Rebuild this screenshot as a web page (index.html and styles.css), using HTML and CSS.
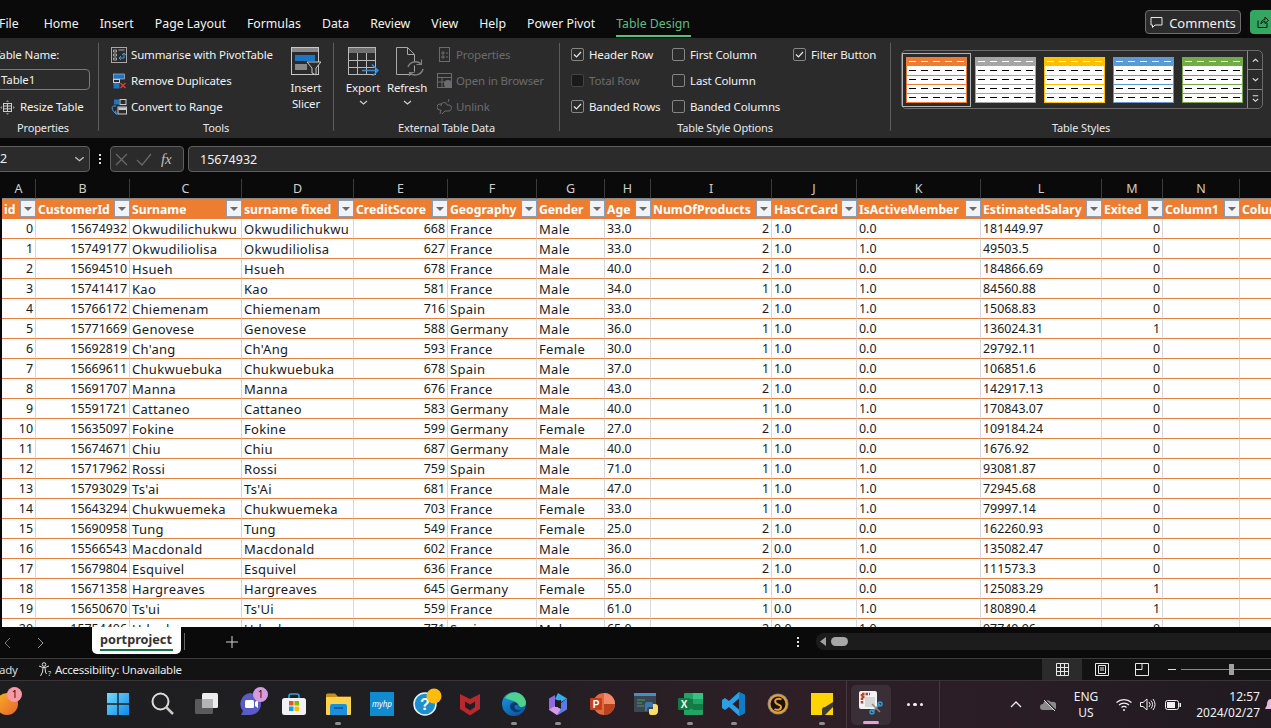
FILE: index.html
```html
<!DOCTYPE html>
<html lang="en">
<head>
<meta charset="utf-8">
<title>portproject - Excel</title>
<link rel="stylesheet" href="styles.css">
</head>
<body>
<svg class="defs" width="0" height="0" aria-hidden="true">
  <symbol id="swatch" viewBox="0 0 61 46">
    <rect width="61" height="46" fill="currentColor"/>
    <rect x="1" y="9" width="59" height="9" fill="#fff"/>
    <rect x="1" y="19" width="59" height="8" fill="#fff"/>
    <rect x="1" y="28" width="59" height="8" fill="#fff"/>
    <rect x="1" y="37" width="59" height="8" fill="#fff"/>
    <path d="M3 4.500h7m5 0h7m5 0h7m5 0h7m5 0h7" stroke="#fff" fill="none"/>
    <path d="M3 13.500h7m5 0h7m5 0h7m5 0h7m5 0h7M3 22.500h7m5 0h7m5 0h7m5 0h7m5 0h7M3 31.500h7m5 0h7m5 0h7m5 0h7m5 0h7M3 40.500h7m5 0h7m5 0h7m5 0h7m5 0h7" stroke="#000" fill="none"/>
  </symbol>
  <symbol id="check" viewBox="0 0 13 13"><path d="M3 6.500l2.500 2.500L10 4" fill="none" stroke="#e8e8e8" stroke-width="1.200"/></symbol>
  <symbol id="chev" viewBox="0 0 9 5"><path d="M1 1l3.500 3L8 1" fill="none" stroke="#d0d0d0" stroke-width="1.200"/></symbol>
</svg>

<nav class="tabs">
  <span class="tab tab-file">File</span>
  <span class="tab">Home</span>
  <span class="tab">Insert</span>
  <span class="tab">Page Layout</span>
  <span class="tab">Formulas</span>
  <span class="tab">Data</span>
  <span class="tab">Review</span>
  <span class="tab">View</span>
  <span class="tab">Help</span>
  <span class="tab">Power Pivot</span>
  <span class="tab tab-active">Table Design</span>
  <span class="tabs-space"></span>
  <button class="comments">
    <svg width="13" height="13" viewBox="0 0 13 13"><path d="M1 1.500h11v7.500H5l-2.500 2.500V9H1z" fill="none" stroke="#e8e8e8"/></svg>
    Comments
  </button>
  <button class="share">
    <svg width="12" height="12" viewBox="0 0 12 12"><path d="M1 4.500v7h9V7M4 8c0-3 2-4.500 4-4.500V1l3.500 3.500L8 7.500V5.500C6 5.500 5 6.500 4 8z" fill="none" stroke="#111"/></svg>
  </button>
</nav>

<section class="ribbon">
  <div class="group g-props">
    <div class="g-body g-col">
      <div class="line line-clip">Table Name:</div>
      <div class="line"><div class="namebox">Table1</div></div>
      <div class="line line-icon resize">
        <svg width="15" height="15" viewBox="0 0 15 15"><rect x="3.500" y="3.500" width="8" height="8" fill="none" stroke="#ccc"/><path d="M3.500 6h8M3.500 8.800h8M7.500 3.500v8" stroke="#ccc"/><path d="M7.500 0l-1.500 2h3zM7.500 15l-1.500-2h3zM0 7.500l2-1.500v3zM15 7.500l-2-1.500v3z" fill="#4a9ad8"/></svg>
        Resize Table
      </div>
    </div>
    <div class="g-label">Properties</div>
  </div>
  <div class="sep"></div>

  <div class="group g-tools">
    <div class="g-body g-row">
      <div class="g-col tools-list">
        <div class="line line-icon">
          <svg width="16" height="16" viewBox="0 0 16 16"><rect x=".5" y=".5" width="15" height="15" fill="none" stroke="#a8a8a8"/><path d="M2.500 3h3v2h-3zM2.500 7h3v2h-3zM2.500 11h3v2h-3zM7.500 3h6" stroke="#a8a8a8" fill="none"/><path d="M13 6v5H8m2-2l-2 2 2 2M11 8l2-2 2 2" stroke="#4a9ad8" fill="none"/></svg>
          Summarise with PivotTable
        </div>
        <div class="line line-icon">
          <svg width="16" height="16" viewBox="0 0 16 16"><rect x="2.500" y="1" width="11" height="5" fill="#1d76c4" stroke="#ccc" stroke-width=".6"/><rect x="2.500" y="6.500" width="6" height="3" fill="none" stroke="#ccc"/><rect x="2.500" y="10" width="6" height="5.500" fill="#1d76c4"/><path d="M9.500 10l5 5m0-5l-5 5" stroke="#e0413a" stroke-width="1.300"/></svg>
          Remove Duplicates
        </div>
        <div class="line line-icon">
          <svg width="16" height="16" viewBox="0 0 16 16"><rect x="3" y=".5" width="5" height="5" fill="#1d76c4"/><rect x="9" y=".5" width="6" height="5" fill="none" stroke="#ccc"/><rect x="7" y="8" width="8.500" height="7" fill="none" stroke="#ccc"/><rect x="7.500" y="8.500" width="7.500" height="2.500" fill="#ccc"/><path d="M5 7H3C1 7 .5 10 2 11.500L4 14h3M5 11.500l-1 2.500 2 1.500" fill="none" stroke="#4a9ad8"/></svg>
          Convert to Range
        </div>
      </div>
      <div class="bigbtn slicer">
        <svg class="big-ic" width="30" height="29" viewBox="0 0 30 29"><rect x=".5" y=".5" width="27" height="27" fill="none" stroke="#c8c8c8"/><rect x="1" y="1" width="26" height="4" fill="#8a8a8a"/><rect x="4" y="8" width="20" height="6" fill="#1d76c4"/><rect x="4" y="17" width="12" height="6" fill="#888"/><path d="M16 15h14l-5 6v7l-4-2v-5z" fill="#2b2b2b" stroke="#c8c8c8"/></svg>
        <span>Insert<br>Slicer</span>
      </div>
    </div>
    <div class="g-label">Tools</div>
  </div>
  <div class="sep"></div>

  <div class="group g-ext">
    <div class="g-body g-row">
      <div class="bigbtn export">
        <svg class="big-ic" width="31" height="29" viewBox="0 0 31 29"><rect x=".5" y=".5" width="27" height="27" fill="none" stroke="#b8b8b8"/><rect x="1" y="1" width="26" height="5" fill="#707070"/><path d="M9.500 6v21M18.500 6v21M1 13.500h26M1 20.500h26" stroke="#b8b8b8"/><path d="M14 23.500h16m-6-6l6 6-6 6" fill="none" stroke="#2f8fdc" stroke-width="1.500"/></svg>
        <span>Export</span>
        <svg class="chev" width="9" height="5"><use href="#chev"/></svg>
      </div>
      <div class="bigbtn refresh">
        <svg class="big-ic refresh-ic" width="28" height="29" viewBox="0 0 28 29"><path d="M.5 .5h11l7 7v20H.500zM11.500 .5v7h7" fill="none" stroke="#a8a8a8"/><path d="M12 20a8 8 0 0 1 13-3M27 22a8 8 0 0 1-13 4" fill="#2b2b2b" stroke="#808080" stroke-width="1.500"/><path d="M25.500 12.500v5h-5M13.500 30v-4.500h5" fill="none" stroke="#808080" stroke-width="1.200"/></svg>
        <span>Refresh</span>
        <svg class="chev" width="9" height="5"><use href="#chev"/></svg>
      </div>
      <div class="g-col ext-list">
        <div class="line line-icon dis">
          <svg width="15" height="16" viewBox="0 0 15 16"><rect x="2.500" y=".5" width="10" height="14" fill="none" stroke="#6c6c6c"/><path d="M5 5h2v2H5zM5 9h2v2H5zM9 6h2M9 10h2" stroke="#6c6c6c" fill="none"/></svg>
          Properties
        </div>
        <div class="line line-icon dis">
          <svg width="15" height="16" viewBox="0 0 15 16"><rect x=".5" y=".5" width="14" height="14" fill="none" stroke="#6c6c6c"/><path d="M1 4.500h13M5 4.500v10M1 9h8" stroke="#6c6c6c"/><circle cx="11" cy="11" r="4" fill="#6c6c6c"/></svg>
          Open in Browser
        </div>
        <div class="line line-icon dis">
          <svg width="15" height="16" viewBox="0 0 15 16"><path d="M5 5H3a3 3 0 0 0 0 6h1l-1 4M8 12h3a3 3 0 0 0 1-6h-2a3 3 0 0 0-6 1M12 0l-1 3M8 12l-3 3" fill="none" stroke="#6c6c6c"/></svg>
          Unlink
        </div>
      </div>
    </div>
    <div class="g-label">External Table Data</div>
  </div>
  <div class="sep"></div>

  <div class="group g-opts">
    <div class="g-body opts-grid">
      <label class="opt"><span class="box"><svg width="13" height="13"><use href="#check"/></svg></span>Header Row</label>
      <label class="opt"><span class="box"></span>First Column</label>
      <label class="opt"><span class="box"><svg width="13" height="13"><use href="#check"/></svg></span>Filter Button</label>
      <label class="opt opt-dis"><span class="box"></span>Total Row</label>
      <label class="opt"><span class="box"></span>Last Column</label>
      <span></span>
      <label class="opt"><span class="box"><svg width="13" height="13"><use href="#check"/></svg></span>Banded Rows</label>
      <label class="opt"><span class="box"></span>Banded Columns</label>
    </div>
    <div class="g-label">Table Style Options</div>
  </div>
  <div class="sep"></div>

  <div class="group g-styles">
    <div class="g-body">
      <div class="gallery">
        <div class="swatches">
          <svg class="swatch sw-selected c-orange" width="61" height="46"><use href="#swatch"/></svg>
          <svg class="swatch c-grey" width="61" height="46"><use href="#swatch"/></svg>
          <svg class="swatch c-gold" width="61" height="46"><use href="#swatch"/></svg>
          <svg class="swatch c-blue" width="61" height="46"><use href="#swatch"/></svg>
          <svg class="swatch c-green" width="61" height="46"><use href="#swatch"/></svg>
        </div>
        <div class="gal-scroll">
          <span class="gal-btn"><svg width="7" height="5" viewBox="0 0 9 5"><path d="M1 4l3.500-3L8 4" fill="none" stroke="#e0e0e0" stroke-width="1.500"/></svg></span>
          <span class="gal-btn"><svg width="7" height="5" viewBox="0 0 9 5"><path d="M1 1l3.500 3L8 1" fill="none" stroke="#e0e0e0" stroke-width="1.500"/></svg></span>
          <span class="gal-btn"><svg width="7" height="9" viewBox="0 0 9 9"><path d="M1 1h7M1 5l3.500 3L8 5" fill="none" stroke="#e0e0e0" stroke-width="1.300"/></svg></span>
        </div>
      </div>
    </div>
    <div class="g-label">Table Styles</div>
  </div>
</section>

<section class="formula">
  <div class="fbox name">
    <span>A2</span>
    <svg width="11" height="6" viewBox="0 0 9 5"><path d="M1 1l3.500 3L8 1" fill="none" stroke="#c8c8c8"/></svg>
  </div>
  <div class="fdots"><i></i><i></i><i></i></div>
  <div class="fbox fbtns">
    <svg width="13" height="13" viewBox="0 0 13 13"><path d="M1 1l11 11m0-11L1 12" stroke="#6a6a6a" stroke-width="1.200"/></svg>
    <svg width="16" height="13" viewBox="0 0 16 13"><path d="M1 7l5 5L15 1" fill="none" stroke="#6a6a6a" stroke-width="1.200"/></svg>
    <span class="fx">fx</span>
  </div>
  <div class="fbox fval">15674932</div>
</section>

<main class="sheet">
<table class="grid">
<colgroup>
<col class="w34"><col class="w94"><col class="w112"><col class="w112"><col class="w94"><col class="w89"><col class="w68"><col class="w46"><col class="w121"><col class="w85"><col class="w124"><col class="w121"><col class="w61"><col class="w77"><col class="w100">
</colgroup>
<thead>
<tr class="letters"><th>A</th><th>B</th><th>C</th><th>D</th><th>E</th><th>F</th><th>G</th><th>H</th><th>I</th><th>J</th><th>K</th><th>L</th><th>M</th><th>N</th><th>O</th></tr>
<tr class="heads">
<th><div class="hc">id<b class="flt"></b></div></th>
<th><div class="hc">CustomerId<b class="flt"></b></div></th>
<th><div class="hc">Surname<b class="flt"></b></div></th>
<th><div class="hc">surname fixed<b class="flt"></b></div></th>
<th><div class="hc">CreditScore<b class="flt"></b></div></th>
<th><div class="hc">Geography<b class="flt"></b></div></th>
<th><div class="hc">Gender<b class="flt"></b></div></th>
<th><div class="hc">Age<b class="flt"></b></div></th>
<th><div class="hc">NumOfProducts<b class="flt"></b></div></th>
<th><div class="hc">HasCrCard<b class="flt"></b></div></th>
<th><div class="hc">IsActiveMember<b class="flt"></b></div></th>
<th><div class="hc">EstimatedSalary<b class="flt"></b></div></th>
<th><div class="hc">Exited<b class="flt"></b></div></th>
<th><div class="hc">Column1<b class="flt"></b></div></th>
<th><div class="hc">Column2<b class="flt"></b></div></th>
</tr>
</thead>
<tbody>
<tr><td>0</td><td>15674932</td><td>Okwudilichukwu</td><td>Okwudilichukwu</td><td>668</td><td>France</td><td>Male</td><td>33.0</td><td>2</td><td>1.0</td><td>0.0</td><td>181449.97</td><td>0</td><td></td><td></td></tr>
<tr><td>1</td><td>15749177</td><td>Okwudiliolisa</td><td>Okwudiliolisa</td><td>627</td><td>France</td><td>Male</td><td>33.0</td><td>2</td><td>1.0</td><td>1.0</td><td>49503.5</td><td>0</td><td></td><td></td></tr>
<tr><td>2</td><td>15694510</td><td>Hsueh</td><td>Hsueh</td><td>678</td><td>France</td><td>Male</td><td>40.0</td><td>2</td><td>1.0</td><td>0.0</td><td>184866.69</td><td>0</td><td></td><td></td></tr>
<tr><td>3</td><td>15741417</td><td>Kao</td><td>Kao</td><td>581</td><td>France</td><td>Male</td><td>34.0</td><td>1</td><td>1.0</td><td>1.0</td><td>84560.88</td><td>0</td><td></td><td></td></tr>
<tr><td>4</td><td>15766172</td><td>Chiemenam</td><td>Chiemenam</td><td>716</td><td>Spain</td><td>Male</td><td>33.0</td><td>2</td><td>1.0</td><td>1.0</td><td>15068.83</td><td>0</td><td></td><td></td></tr>
<tr><td>5</td><td>15771669</td><td>Genovese</td><td>Genovese</td><td>588</td><td>Germany</td><td>Male</td><td>36.0</td><td>1</td><td>1.0</td><td>0.0</td><td>136024.31</td><td>1</td><td></td><td></td></tr>
<tr><td>6</td><td>15692819</td><td>Ch'ang</td><td>Ch'Ang</td><td>593</td><td>France</td><td>Female</td><td>30.0</td><td>1</td><td>1.0</td><td>0.0</td><td>29792.11</td><td>0</td><td></td><td></td></tr>
<tr><td>7</td><td>15669611</td><td>Chukwuebuka</td><td>Chukwuebuka</td><td>678</td><td>Spain</td><td>Male</td><td>37.0</td><td>1</td><td>1.0</td><td>0.0</td><td>106851.6</td><td>0</td><td></td><td></td></tr>
<tr><td>8</td><td>15691707</td><td>Manna</td><td>Manna</td><td>676</td><td>France</td><td>Male</td><td>43.0</td><td>2</td><td>1.0</td><td>0.0</td><td>142917.13</td><td>0</td><td></td><td></td></tr>
<tr><td>9</td><td>15591721</td><td>Cattaneo</td><td>Cattaneo</td><td>583</td><td>Germany</td><td>Male</td><td>40.0</td><td>1</td><td>1.0</td><td>1.0</td><td>170843.07</td><td>0</td><td></td><td></td></tr>
<tr><td>10</td><td>15635097</td><td>Fokine</td><td>Fokine</td><td>599</td><td>Germany</td><td>Female</td><td>27.0</td><td>2</td><td>1.0</td><td>0.0</td><td>109184.24</td><td>0</td><td></td><td></td></tr>
<tr><td>11</td><td>15674671</td><td>Chiu</td><td>Chiu</td><td>687</td><td>Germany</td><td>Male</td><td>40.0</td><td>1</td><td>1.0</td><td>0.0</td><td>1676.92</td><td>0</td><td></td><td></td></tr>
<tr><td>12</td><td>15717962</td><td>Rossi</td><td>Rossi</td><td>759</td><td>Spain</td><td>Male</td><td>71.0</td><td>1</td><td>1.0</td><td>1.0</td><td>93081.87</td><td>0</td><td></td><td></td></tr>
<tr><td>13</td><td>15793029</td><td>Ts'ai</td><td>Ts'Ai</td><td>681</td><td>France</td><td>Male</td><td>47.0</td><td>1</td><td>1.0</td><td>1.0</td><td>72945.68</td><td>0</td><td></td><td></td></tr>
<tr><td>14</td><td>15643294</td><td>Chukwuemeka</td><td>Chukwuemeka</td><td>703</td><td>France</td><td>Female</td><td>33.0</td><td>1</td><td>1.0</td><td>1.0</td><td>79997.14</td><td>0</td><td></td><td></td></tr>
<tr><td>15</td><td>15690958</td><td>Tung</td><td>Tung</td><td>549</td><td>France</td><td>Female</td><td>25.0</td><td>2</td><td>1.0</td><td>0.0</td><td>162260.93</td><td>0</td><td></td><td></td></tr>
<tr><td>16</td><td>15566543</td><td>Macdonald</td><td>Macdonald</td><td>602</td><td>France</td><td>Male</td><td>36.0</td><td>2</td><td>0.0</td><td>1.0</td><td>135082.47</td><td>0</td><td></td><td></td></tr>
<tr><td>17</td><td>15679804</td><td>Esquivel</td><td>Esquivel</td><td>636</td><td>France</td><td>Male</td><td>36.0</td><td>2</td><td>1.0</td><td>0.0</td><td>111573.3</td><td>0</td><td></td><td></td></tr>
<tr><td>18</td><td>15671358</td><td>Hargreaves</td><td>Hargreaves</td><td>645</td><td>Germany</td><td>Female</td><td>55.0</td><td>1</td><td>1.0</td><td>0.0</td><td>125083.29</td><td>1</td><td></td><td></td></tr>
<tr><td>19</td><td>15650670</td><td>Ts'ui</td><td>Ts'Ui</td><td>559</td><td>France</td><td>Male</td><td>61.0</td><td>1</td><td>0.0</td><td>1.0</td><td>180890.4</td><td>1</td><td></td><td></td></tr>
<tr><td>20</td><td>15754406</td><td>Udenkwo</td><td>Udenkwo</td><td>771</td><td>Spain</td><td>Male</td><td>65.0</td><td>2</td><td>0.0</td><td>1.0</td><td>97749.96</td><td>0</td><td></td><td></td></tr>
</tbody>
</table>
</main>

<section class="sheetbar">
  <svg class="nav-a" width="7" height="12" viewBox="0 0 7 12"><path d="M6 1L1 6l5 5" fill="none" stroke="#777"/></svg>
  <svg class="nav-b" width="7" height="12" viewBox="0 0 7 12"><path d="M1 1l5 5-5 5" fill="none" stroke="#999"/></svg>
  <div class="sheet-tab"><span>portproject</span></div>
  <div class="tab-sep"></div>
  <svg class="add" width="12" height="12" viewBox="0 0 12 12"><path d="M6 0v12M0 6h12" stroke="#d0d0d0"/></svg>
  <div class="sheet-dots"><i></i><i></i><i></i></div>
  <div class="hscroll">
    <svg width="6" height="9" viewBox="0 0 6 9"><path d="M6 0v9L0 4.500z" fill="#a0a0a0"/></svg>
    <span class="thumb"></span>
  </div>
</section>

<section class="status">
  <span class="ready">Ready</span>
  <svg class="a11y" width="15" height="15" viewBox="0 0 15 15"><circle cx="6" cy="2.500" r="1.800" fill="none" stroke="#e0e0e0"/><path d="M1 4l4 1.500h2L11 4M5 6l-.5 4-2 4M7 6l.5 4 1 2" fill="none" stroke="#e0e0e0"/><text x="10" y="14" class="a11y-q">?</text></svg>
  <span class="a11y-t">Accessibility: Unavailable</span>
  <span class="tabs-space"></span>
  <div class="view view-on"><svg width="13" height="13" viewBox="0 0 13 13"><path d="M.5.500h12v12H.5zM4.500.5v12M8.500.5v12M.5 4.500h12M.5 8.500h12" fill="none" stroke="#e8e8e8"/></svg></div>
  <div class="view"><svg width="14" height="13" viewBox="0 0 14 13"><path d="M.5.500h13v12H.5z" fill="none" stroke="#e8e8e8"/><path d="M3.500 2.500h7v8h-7zM5 5h4M5 7h4" fill="none" stroke="#e8e8e8"/></svg></div>
  <div class="view"><svg width="14" height="13" viewBox="0 0 14 13"><path d="M.5.500h13v12H.5zM.5 6.500h6.500V.5" fill="none" stroke="#e8e8e8"/></svg></div>
  <div class="zoomer"><i class="z-minus"></i><div class="z-track"><i class="z-thumb"></i></div></div>
</section>

<footer class="taskbar">
  <div class="widget"><span class="widget-ball"></span><span class="badge b-pink">1</span></div>

  <div class="slot"><svg width="24" height="24" viewBox="0 0 24 24"><defs><linearGradient id="win" x1="0" y1="0" x2="1" y2="1"><stop offset="0" stop-color="#6fdcff"/><stop offset="1" stop-color="#0f8ae8"/></linearGradient></defs><path d="M1 1h10.300v10.300H1zM12.700 1H23v10.300H12.700zM1 12.700h10.300V23H1zM12.700 12.700H23V23H12.700z" fill="url(#win)"/></svg></div>
  <div class="slot"><svg width="23" height="23" viewBox="0 0 23 23"><circle cx="9.500" cy="9.500" r="8" fill="#222" stroke="#dcdcdc" stroke-width="2"/><path d="M15 15l7 7" stroke="#c8c8c8" stroke-width="2.500"/></svg></div>
  <div class="slot"><svg width="25" height="23" viewBox="0 0 25 23"><rect x="8" y="1" width="16" height="15" rx="1.500" fill="#ececec"/><rect x="1" y="7" width="18" height="15" rx="1.500" fill="#5a5a5a"/><rect x="8" y="7" width="11" height="9" fill="#b4b4b4"/></svg></div>
  <div class="slot"><svg width="25" height="24" viewBox="0 0 25 24"><path d="M12 1a11 11 0 0 1 0 22H3l2-4a11 11 0 0 1 7-18z" fill="#5b5bc8"/><rect x="7" y="8" width="9" height="8" rx="1.500" fill="#fff"/><path d="M17 10l3-2v8l-3-2z" fill="#fff"/></svg><span class="badge b-purple">1</span></div>
  <div class="slot"><svg width="24" height="24" viewBox="0 0 24 24"><path d="M7 7V4a2 2 0 0 1 2-2h6a2 2 0 0 1 2 2v3" fill="none" stroke="#2aa7e0" stroke-width="1.600"/><rect y="6" width="24" height="17" rx="2.500" fill="#f2f2f2"/><rect x="7" y="9" width="4.500" height="4.500" fill="#f25022"/><rect x="12.500" y="9" width="4.500" height="4.500" fill="#7fba00"/><rect x="7" y="14.500" width="4.500" height="4.500" fill="#00a4ef"/><rect x="12.500" y="14.500" width="4.500" height="4.500" fill="#ffb900"/></svg></div>
  <div class="slot running"><svg width="25" height="23" viewBox="0 0 25 23"><path d="M0 3a1.500 1.500 0 0 1 1.500-1.500H9l3 3h13V8H0z" fill="#c98f12"/><rect y="5" width="25" height="18" rx="1" fill="#ffd24a"/><path d="M4 14a2 2 0 0 1 2-2h13a2 2 0 0 1 2 2v9H4z" fill="#1a8fdc"/><rect x="8" y="15" width="9" height="2" fill="#0f5fa8"/></svg></div>
  <div class="slot"><div class="myhp">myhp</div></div>
  <div class="slot"><svg class="ic-over" width="34" height="28" viewBox="0 0 34 28"><circle cx="12" cy="16" r="11" fill="#1c8fd0" stroke="#e8f4fa" stroke-width="1.500"/><text x="12" y="22" class="qmark">?</text><circle cx="21" cy="8" r="7.500" fill="#ffbd0a"/></svg></div>
  <div class="slot"><svg width="22" height="24" viewBox="0 0 22 24"><path fill-rule="evenodd" d="M1 2l10 5 10-5v15l-10 6.500L1 17zM6 9.500v5.500l5 3.500 5-3.500V9.500l-5 3z" fill="#b8282d"/></svg></div>
  <div class="slot running"><svg width="24" height="24" viewBox="0 0 24 24"><defs><linearGradient id="edge" x1="0" y1="0" x2=".6" y2="1"><stop offset="0" stop-color="#1b9de2"/><stop offset="1" stop-color="#0c59a4"/></linearGradient></defs><circle cx="12" cy="12" r="12" fill="url(#edge)"/><path d="M3 6C7-1 18-2 23 7c2 4 1 8-3 8-3 0-3-2-4-3-3-4-9-4-13-6z" fill="#4fd08c"/><path d="M11 19c-4-2-4-7 0-8.500 3-1 5 1 5 3-1.500-1-3.500-.5-3.500 1.500 0 2.500 3 4 7 2.500-2 3-6 3.500-8.500 1.500z" fill="#0b3a72"/></svg></div>
  <div class="slot running"><svg width="20" height="24" viewBox="0 0 20 24"><path d="M10 1l9 5.500L13 10 7 7z" fill="#2fb0ea"/><path d="M1 6.500L7 3v8l3 2v6l-1 4-8-5z" fill="#8f6ae0"/><path d="M19 6.500v11L10 23l-3-2 6-4v-6z" fill="#5a7ae6"/><path d="M1 17.500L7 14l6 3-4 6z" fill="#d99be6"/><path d="M7 9l6-1v7l-6 0z" fill="#1f1e26"/></svg></div>
  <div class="slot"><svg width="25" height="24" viewBox="0 0 25 24"><circle cx="14" cy="12" r="11" fill="#e06b42"/><path d="M14 12h11a11 11 0 0 1-11 11z" fill="#b8431f"/><path d="M14 12V1a11 11 0 0 1 11 11z" fill="#f08a68"/><rect y="6" width="12" height="12" rx="1" fill="#c43e1c"/><text x="6" y="15.500" class="app-letter">P</text></svg></div>
  <div class="slot"><svg width="24" height="24" viewBox="0 0 24 24"><rect y="1" width="22" height="19" rx="1" fill="#3a4752"/><rect y="1" width="22" height="3" fill="#3f8fd2"/><path d="M3 8h8M3 11h5M3 14h7" stroke="#4d9b5a"/><path d="M13 10h4a2 2 0 0 1 2 2v3h-4a2 2 0 0 0-2 2v2h-2v-5a3 3 0 0 1 2-4z" fill="#3c78aa"/><path d="M19 12h2a3 3 0 0 1 3 3v4a4 4 0 0 1-4 4h-3a2 2 0 0 1-2-2v-4h4z" fill="#fcdc6a"/></svg></div>
  <div class="slot running"><svg width="25" height="23" viewBox="0 0 25 23"><rect x="6" y="1" width="19" height="22" rx="1" fill="#21a366"/><rect x="15" y="1" width="10" height="6" fill="#33c481"/><rect x="15" y="12" width="10" height="6" fill="#107c41"/><rect x="6" y="7" width="9" height="10" fill="#185c37" opacity=".6"/><rect y="6" width="12" height="12" rx="1" fill="#107c41"/><text x="6" y="15.500" class="app-letter">X</text></svg></div>
  <div class="slot running"><svg width="24" height="24" viewBox="0 0 24 24"><path d="M17 0l6 3v18l-6 3-10-9-4 3-3-2V8l3-2 4 3zM17 6.500L10.500 12l6.500 5.500z" fill-rule="evenodd" fill="#2a9fe6"/><path d="M17 0l6 3v18l-6 3z" fill="#0f7cc6"/></svg></div>
  <div class="slot"><svg width="22" height="22" viewBox="0 0 22 22"><circle cx="11" cy="11" r="10.500" fill="#8a8a8a"/><circle cx="11" cy="11" r="9.500" fill="#e8a030"/><circle cx="11" cy="11" r="7.500" fill="#17120a"/><path d="M14.500 6.500C11 4.500 7 6.500 8.500 9.500s5.500 1.500 5.500 4.500-4 3.500-6.500 2" fill="none" stroke="#e8a030" stroke-width="2"/></svg></div>
  <div class="slot running"><svg width="22" height="22" viewBox="0 0 22 22"><path d="M0 0h22v22H0z" fill="#ffd400"/><path d="M22 9v5l-8 8H11v-5a3 3 0 0 1 3-3z" fill="#3a3a3a"/></svg></div>

  <div class="tb-sep sep-a"></div>
  <div class="snip"><svg width="24" height="24" viewBox="0 0 24 24"><rect width="18" height="18" rx="2" fill="#f2f2f2"/><path d="M3 3h8M3 3v10M3 6h3" stroke="#d0391c" stroke-width="2.500" stroke-dasharray="2.500 1"/><rect x="6" y="6" width="10" height="10" fill="#d6d6d6"/><path d="M13 13l8 8M21 13l-8 8" stroke="#8a8a8a" stroke-width="1.500"/><circle cx="21" cy="13" r="2" fill="none" stroke="#1aa0e0" stroke-width="1.500"/><circle cx="13" cy="21" r="2" fill="none" stroke="#1aa0e0" stroke-width="1.500"/></svg></div>
  <div class="more"><i></i><i></i><i></i></div>
  <div class="tb-sep sep-b"></div>

  <svg class="tray-up" width="12" height="7" viewBox="0 0 12 7"><path d="M1 6l5-5 5 5" fill="none" stroke="#e8e8e8" stroke-width="1.300"/></svg>
  <svg class="tray-cloud" width="16" height="13" viewBox="0 0 16 13"><path d="M3 12a3 3 0 0 1 0-6 4.500 4.500 0 0 1 8-2 3.500 3.500 0 0 1 3 8z" fill="#8a8a8a"/><path d="M4 1l11 11" stroke="#1f1e22" stroke-width="1.500"/><path d="M4 2l11 11" stroke="#e0e0e0"/></svg>
  <div class="lang"><span>ENG</span><span>US</span></div>
  <svg class="tray-wifi" width="16" height="13" viewBox="0 0 16 13"><path d="M.5 4.500a11 11 0 0 1 15 0M3 7a7.500 7.500 0 0 1 10 0M5.500 9.500a3.500 3.500 0 0 1 5 0" fill="none" stroke="#f0f0f0" stroke-width="1.200"/><circle cx="8" cy="12" r="1" fill="#f0f0f0"/></svg>
  <svg class="tray-vol" width="16" height="13" viewBox="0 0 16 13"><path d="M.5 4.500h2.500L7 1v11L3 8.500H.5z" fill="none" stroke="#f0f0f0"/><path d="M9 4a3.500 3.500 0 0 1 0 5M11 2.500a6 6 0 0 1 0 8M13 1a8.500 8.500 0 0 1 0 11" fill="none" stroke="#f0f0f0"/></svg>
  <svg class="tray-bat" width="16" height="10" viewBox="0 0 16 10"><rect x=".5" y=".5" width="13" height="9" rx="2" fill="none" stroke="#f0f0f0"/><rect x="2" y="2" width="8" height="6" fill="#f0f0f0"/><rect x="14.500" y="3" width="1.500" height="4" fill="#f0f0f0"/></svg>
  <div class="clock"><span>12:57</span><span>2024/02/27</span></div>
  <svg class="bell" width="6" height="13" viewBox="0 0 6 13"><path d="M6 1C3 1 2 4 2 7L0 11h6z" fill="#e8b7e0"/></svg>
</footer>
</body>
</html>
```
FILE: styles.css
```css
* { box-sizing: border-box; }
html, body { margin: 0; padding: 0; }
body {
  width: 1271px;
  height: 728px;
  overflow: hidden;
  background: #0a0a0a;
  color: #f0f0f0;
  font-family: "Noto Sans", "Liberation Sans", sans-serif;
  font-size: 11.500px;
  letter-spacing: -0.15px;
  line-height: 16px;
}
svg { display: block; flex: none; }
.defs { position: absolute; }

/* tabs */
.tabs {
  height: 38px;
  display: flex;
  align-items: center;
  gap: 21px;
  padding: 9px 0 0;
  font-size: 12.300px;
  letter-spacing: 0;
  white-space: nowrap;
  overflow: hidden;
}
.tab { color: #f2f2f2; position: relative; height: 24px; line-height: 24px; flex: none; }
.tab-file { margin-left: -1px; margin-right: 4px; }
.tab-active { color: #5cbd80; }
.tab-active::after {
  content: ""; position: absolute; left: 0; right: -1px; bottom: -1px; height: 2px; background: #5cbd80;
}
.tabs-space { flex: 1; }
.comments {
  width: 96px; height: 24px; margin-top: -3px;
  display: flex; align-items: center; justify-content: center; gap: 6px;
  background: #2b2b2b; color: #f0f0f0; border: 1px solid #6e6e6e; border-radius: 4px;
  font: 13px "Noto Sans", sans-serif; padding: 1px 0 0;
}
.share {
  width: 30px; height: 24px; margin-top: -3px; margin-left: -12px; margin-right: -9px;
  background: #33a661; border: 0; border-radius: 4px; padding: 0 0 0 7px; flex: none;
}

/* ribbon */
.ribbon { height: 100px; background: #2b2b2b; display: flex; overflow: hidden; }
.sep { width: 1px; margin: 5px 0 7px; background: #5c5c5c; flex: none; }
.group { display: flex; flex-direction: column; height: 100px; flex: none; }
.g-body { flex: 1; min-height: 0; padding-top: 4px; }
.g-label { height: 20px; line-height: 20px; text-align: center; color: #e8e8e8; font-size: 11px; white-space: nowrap; flex: none; }
.g-col { display: flex; flex-direction: column; }
.g-row { display: flex; }
.line { height: 26px; flex: none; display: flex; align-items: center; white-space: nowrap; color: #f0f0f0; }
.line-icon { gap: 4px; }
.resize { gap: 5px; }
.dis { color: #6c6c6c; }
.g-props { width: 98px; }
.g-tools { width: 234px; }
.g-ext { width: 225px; }
.g-opts { width: 330px; }
.g-styles { flex: 1; }
.g-props .g-label { padding-right: 12px; }
.line-clip { margin-left: -6px; }
.namebox {
  width: 101px; height: 21px; margin: -3px 0 0 -11px; padding-left: 11px; line-height: 19px;
  border: 1px solid #7a7a7a; border-radius: 4px; background: #2b2b2b;
}
.tools-list { width: 192px; padding-left: 12px; flex: none; }
.bigbtn { display: flex; flex-direction: column; align-items: center; text-align: center; padding-top: 5px; flex: none; }
.big-ic { margin-bottom: 4px; }
.slicer { width: 30px; }
.slicer span { line-height: 16px; }
.export { width: 40px; margin-left: 9px; }
.refresh { width: 40px; margin-left: 4px; }
.refresh-ic { margin-left: 6px; }
.chev { margin-top: 4px; }
.ext-list { margin-left: 10px; }
.opts-grid {
  display: grid;
  grid-template-columns: 101px 121px 1fr;
  grid-auto-rows: 26px;
  padding-left: 11px;
}
.opt { display: flex; align-items: center; gap: 5px; white-space: nowrap; }
.box { width: 13px; height: 13px; border: 1px solid #858585; border-radius: 2px; flex: none; position: relative; margin-top: -2px; }
.box svg { margin: -1px; }
.opt-dis { color: #6c6c6c; }
.opt-dis .box { background: #1a1a1a; border-color: #444; }
.g-styles .g-body { padding-top: 12px; }
.gallery {
  width: 362px; height: 59px; margin-left: 10px;
  border: 1px solid #6a6a6a; border-radius: 5px;
  display: flex; justify-content: space-between;
}
.swatches { display: flex; gap: 8px; padding: 6px 0 0 4px; }
.swatch { display: block; }
.sw-selected { outline: 1px solid #b4b4b4; outline-offset: 3px; }
.c-orange { color: #ed7d31; }
.c-grey { color: #a5a5a5; }
.c-gold { color: #ffc000; }
.c-blue { color: #5b9bd5; }
.c-green { color: #70ad47; }
.gal-scroll { width: 15px; display: flex; flex-direction: column; border-left: 1px solid #8a8a8a; }
.gal-btn { flex: 1; display: flex; align-items: center; justify-content: center; border-top: 1px solid #8a8a8a; }
.gal-btn:first-child { border-top: 0; }

/* formula bar */
.formula { height: 26px; margin-top: 8px; display: flex; }
.fbox { background: #2b2b2b; border: 1px solid #5e5e5e; border-radius: 4px; height: 26px; display: flex; align-items: center; flex: none; }
.name { width: 102px; margin-left: -12px; padding: 0 4px 0 3px; justify-content: space-between; font-size: 12.500px; letter-spacing: 0; }
.fdots { width: 20px; flex: none; display: flex; flex-direction: column; align-items: center; justify-content: center; gap: 2px; }
.fdots i, .sheet-dots i { display: block; width: 2px; height: 2px; background: #e0e0e0; }
.fbtns { width: 74px; padding: 0 4px; gap: 8px; margin-right: 4px; }
.fx { font: italic 15px "Liberation Serif", serif; color: #c0c0c0; margin-left: 1px; }
.fval { width: 1095px; padding: 1px 0 0 11px; font-size: 12.500px; letter-spacing: 0; }

/* sheet */
.sheet { height: 448px; margin-top: 7px; padding-left: 2px; overflow: hidden; background: #0a0a0a; }
.grid { border-collapse: separate; border-spacing: 0; table-layout: fixed; width: 1338px; font-size: 13px; color: #1a1a1a; letter-spacing: 0; }
.w34 { width: 34px; } .w94 { width: 94px; } .w112 { width: 112px; } .w89 { width: 89px; } .w68 { width: 68px; }
.w46 { width: 46px; } .w121 { width: 121px; } .w85 { width: 85px; } .w124 { width: 124px; } .w61 { width: 61px; }
.w77 { width: 77px; } .w100 { width: 100px; }
.letters th {
  height: 20px; padding: 1px 0 0; font-weight: 400; font-size: 12.500px; line-height: 18px; color: #cfcfcf;
  background: #0a0a0a; border-right: 1px solid #3c3c3c; border-bottom: 1px solid #8a8a8a;
}
.heads th {
  height: 20px; padding: 0; background: #ed7d31; color: #fff; font-weight: 700; text-align: left; font-size: 12.200px;
  overflow: hidden; white-space: nowrap;
}
.hc { display: flex; align-items: flex-start; justify-content: space-between; height: 20px; padding-left: 2px; line-height: 21px; }
.flt {
  width: 16px; height: 17px; flex: none; margin-top: 1px; background: #f1f3f6; border: 1px solid #8c9db3;
  display: flex; align-items: center; justify-content: center;
}
.flt::before {
  content: ""; border: 4px solid transparent; border-top: 4px solid #6a6a6a; border-bottom: 0;
}
tbody td {
  height: 20px; padding: 1px 2px 0; background: #fff; line-height: 18px; white-space: nowrap; overflow: hidden;
  border-right: 1px solid #d8d8d8; border-bottom: 1px solid #e9813e; font-size: 12.400px;
}
td:nth-child(1), td:nth-child(2), td:nth-child(5), td:nth-child(9), td:nth-child(13) { text-align: right; }
td:nth-child(3), td:nth-child(4), td:nth-child(6), td:nth-child(7) { font-size: 13px; letter-spacing: .3px; }

/* sheet tabs */
.sheetbar { height: 31px; display: flex; align-items: center; position: relative; letter-spacing: 0; }
.nav-a { margin: 0 0 0 4px; }
.nav-b { margin: 0 0 0 26px; }
.sheet-tab {
  width: 89px; height: 27px; margin: -4px 0 0 48px; background: #fff; border-radius: 0 0 5px 5px;
  padding: 0 8px; color: #333; font-weight: 700; font-size: 12.700px;
}
.sheet-tab span { display: block; height: 24px; line-height: 24px; border-bottom: 2px solid #107c41; white-space: nowrap; }
.tab-sep { width: 1px; height: 17px; margin: -2px 0 0 3px; background: #666; }
.add { margin: -2px 0 0 41px; }
.sheet-dots { display: flex; flex-direction: column; gap: 2px; margin: -2px 0 0 559px; }
.hscroll {
  width: 455px; height: 17px; margin: -2px 0 0 17px; background: #1c1c1c; border-radius: 8px 0 0 8px;
  display: flex; align-items: center; gap: 5px; padding-left: 4px; flex: none;
}
.thumb { width: 17px; height: 9px; border-radius: 5px; background: #a8a8a8; }

/* status */
.status { height: 22px; border-top: 1px solid #3c3c3c; background: #131313; display: flex; align-items: center; position: relative; white-space: nowrap; letter-spacing: -.28px; }
.ready { margin-left: -14px; color: #d8d8d8; width: 52px; flex: none; }
.a11y { margin-right: 2px; }
.a11y-q { font-size: 7px; fill: #e0e0e0; }
.a11y-t { color: #e8e8e8; flex: none; }
.view { width: 40px; height: 21px; display: flex; align-items: center; justify-content: center; flex: none; }
.view-on { background: #2b2b2b; }
.zoomer { width: 109px; display: flex; align-items: center; flex: none; }
.z-minus { width: 8px; height: 1px; background: #e0e0e0; margin-left: 6px; flex: none; }
.z-track { width: 90px; height: 1px; background: #888; margin-left: 5px; position: relative; flex: none; }
.z-thumb { position: absolute; left: 48px; top: -5px; width: 5px; height: 11px; background: #a0a0a0; }

/* taskbar */
.taskbar {
  height: 48px; border-top: 1px solid #3a3438; letter-spacing: 0; font-size: 12px;
  background: linear-gradient(90deg, #1e1e21 0%, #1f1e22 35%, #2e1f26 62%, #2a1d26 80%, #1f1a20 100%);
  display: flex; align-items: center; position: relative;
}
.widget { width: 96px; height: 47px; position: relative; flex: none; }
.widget-ball { position: absolute; left: -4px; top: 12px; width: 22px; height: 22px; border-radius: 50%; background: linear-gradient(135deg, #f5b326, #e8632a); }
.badge {
  position: absolute; width: 15px; height: 15px; border-radius: 50%; color: #111; font-size: 10px;
  line-height: 15px; text-align: center;
}
.b-pink { left: 7px; top: 6px; background: #f49aa8; }
.b-purple { right: 4px; top: 6px; background: #d39ce0; }
.slot { width: 44px; height: 47px; display: flex; align-items: center; justify-content: center; position: relative; flex: none; padding-bottom: 2px; }
.running::after {
  content: ""; position: absolute; left: 19px; bottom: 3px; width: 6px; height: 3px; border-radius: 2px; background: #8e8e8e;
}
.myhp {
  width: 24px; height: 24px; background: #0f8ccf; color: #fff; font-size: 8px; font-style: italic; line-height: 24px; text-align: center;
}
.ic-over { margin: -4px 0 0 8px; }
.qmark { font: 700 16px "Liberation Sans", sans-serif; fill: #fff; text-anchor: middle; }
.app-letter { font: 700 10px "Liberation Sans", sans-serif; fill: #fff; text-anchor: middle; }
.tb-sep { width: 1px; height: 47px; background: #45383e; flex: none; }
.sep-a { margin-left: 2px; }
.snip {
  width: 40px; height: 40px; margin-left: 4px; background: #3a2f36; border-radius: 5px; flex: none; position: relative;
  display: flex; align-items: center; justify-content: center; padding-bottom: 4px;
}
.snip::after { content: ""; position: absolute; left: 12px; bottom: 1px; width: 16px; height: 3px; border-radius: 2px; background: #e0a3e0; }
.more { width: 48px; display: flex; justify-content: center; gap: 3px; flex: none; }
.more i { display: block; width: 3.500px; height: 3.500px; border-radius: 50%; background: #f0f0f0; }
.tray-up { margin-left: 70px; }
.tray-cloud { margin-left: 18px; }
.lang { width: 30px; margin-left: 15px; display: flex; flex-direction: column; align-items: center; line-height: 16px; flex: none; }
.tray-wifi { margin-left: 15px; }
.tray-vol { margin-left: 8px; }
.tray-bat { margin-left: 9px; }
.clock { width: 79px; display: flex; flex-direction: column; align-items: flex-end; line-height: 16px; flex: none; }
.bell { margin-left: 5px; }
```
